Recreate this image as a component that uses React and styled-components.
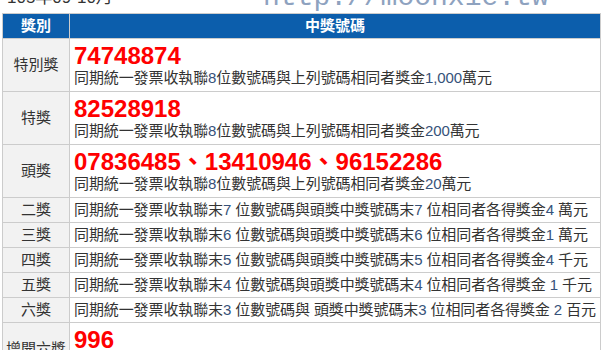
import React from 'react';
import styled, { createGlobalStyle } from 'styled-components';

const GlobalStyle = createGlobalStyle`
    body {
        margin: 0;
        background: #fff;
        font-family: "Liberation Sans", "Noto Sans CJK TC", sans-serif;
        color: #333;
    }
`;

const Page = styled.div`
    width: 604px;
    height: 350px;
    overflow: hidden;
`;

const TopStrip = styled.div`
    height: 13px;
    overflow: hidden;
    display: grid;
    grid-template-columns: 263px 1fr;
    grid-template-rows: 13px;
    align-items: end;
`;

const Period = styled.div`
    padding-left: 7px;
    font-size: 17px;
    line-height: 17px;
    margin-bottom: 7px;
    color: #333;
    white-space: nowrap;
`;

const Watermark = styled.div`
    font-family: "Liberation Mono", monospace;
    font-size: 28px;
    line-height: 28px;
    margin-bottom: 1px;
    color: #8ea2bf;
    white-space: nowrap;
`;

const Table = styled.table`
    width: 599px;
    margin-left: 2px;
    border-collapse: collapse;
    table-layout: fixed;
    font-size: 15px;
`;

const HeadCell = styled.th`
    height: 24px;
    padding: 0;
    background: #0c5eac;
    color: #fff;
    font-weight: bold;
    font-size: 15px;
    line-height: 24px;
    text-align: center;
    border: 1px solid #ccc;
`;

const LabelCell = styled.td`
    padding: 0;
    background: #f2f2f2;
    border: 1px solid #ccc;
    text-align: center;
    vertical-align: middle;
    white-space: nowrap;
    line-height: 20px;
`;

const PrizeCell = styled.td`
    padding: ${({ $big }) => ($big ? '5px 4px 3px' : '0 4px')};
    height: ${({ $big }) => ($big ? '44px' : '24px')};
    border: 1px solid #ccc;
    line-height: ${({ $big }) => ($big ? '20px' : '24px')};
    letter-spacing: -0.1px;
    white-space: nowrap;
    overflow: hidden;
`;

const BigNumber = styled.div`
    color: #ff0000;
    font-weight: bold;
    font-size: 24px;
    line-height: 24px;
    letter-spacing: 0;
`;

const Desc = styled.div`
    line-height: 20px;
`;

const Digit = styled.span`
    color: #36527a;
`;

const bigRows = [
    { label: '特別獎', numbers: '74748874', n: '8', amount: '1,000' },
    { label: '特獎', numbers: '82528918', n: '8', amount: '200' },
    { label: '頭獎', numbers: '07836485、13410946、96152286', n: '8', amount: '20' },
];

const smallRows = [
    { label: '二獎', n: '7', pre: '', amount: '4', unit: '萬元' },
    { label: '三獎', n: '6', pre: '', amount: '1', unit: '萬元' },
    { label: '四獎', n: '5', pre: '', amount: '4', unit: '千元' },
    { label: '五獎', n: '4', pre: ' ', amount: '1', unit: '千元' },
    { label: '六獎', n: '3', pre: ' ', amount: '2', unit: '百元', gap: ' ' },
];

export default function App() {
    return (
        <Page>
            <GlobalStyle />
            <TopStrip>
                <Period>105年09-10月</Period>
                <Watermark>http://moonxie.tw</Watermark>
            </TopStrip>
            <Table>
                <colgroup>
                    <col style={{ width: '67px' }} />
                    <col />
                </colgroup>
                <thead>
                    <tr>
                        <HeadCell>獎別</HeadCell>
                        <HeadCell>中獎號碼</HeadCell>
                    </tr>
                </thead>
                <tbody>
                    {bigRows.map((r) => (
                        <tr key={r.label}>
                            <LabelCell>{r.label}</LabelCell>
                            <PrizeCell $big>
                                <BigNumber>{r.numbers}</BigNumber>
                                <Desc>
                                    同期統一發票收執聯<Digit>{r.n}</Digit>位數號碼與上列號碼相同者獎金<Digit>{r.amount}</Digit>萬元
                                </Desc>
                            </PrizeCell>
                        </tr>
                    ))}
                    {smallRows.map((r) => (
                        <tr key={r.label}>
                            <LabelCell>{r.label}</LabelCell>
                            <PrizeCell>
                                同期統一發票收執聯末<Digit>{r.n}</Digit> 位數號碼與{r.gap}頭獎中獎號碼末<Digit>{r.n}</Digit> 位相同者各得獎金{r.pre}<Digit>{r.amount}</Digit> {r.unit}
                            </PrizeCell>
                        </tr>
                    ))}
                    <tr>
                        <LabelCell>增開六獎</LabelCell>
                        <PrizeCell $big>
                            <BigNumber>996</BigNumber>
                            <Desc>
                                同期統一發票收執聯末<Digit>3</Digit>位數號碼與增開六獎號碼相同者各得獎金<Digit>2</Digit>百元
                            </Desc>
                        </PrizeCell>
                    </tr>
                </tbody>
            </Table>
        </Page>
    );
}
